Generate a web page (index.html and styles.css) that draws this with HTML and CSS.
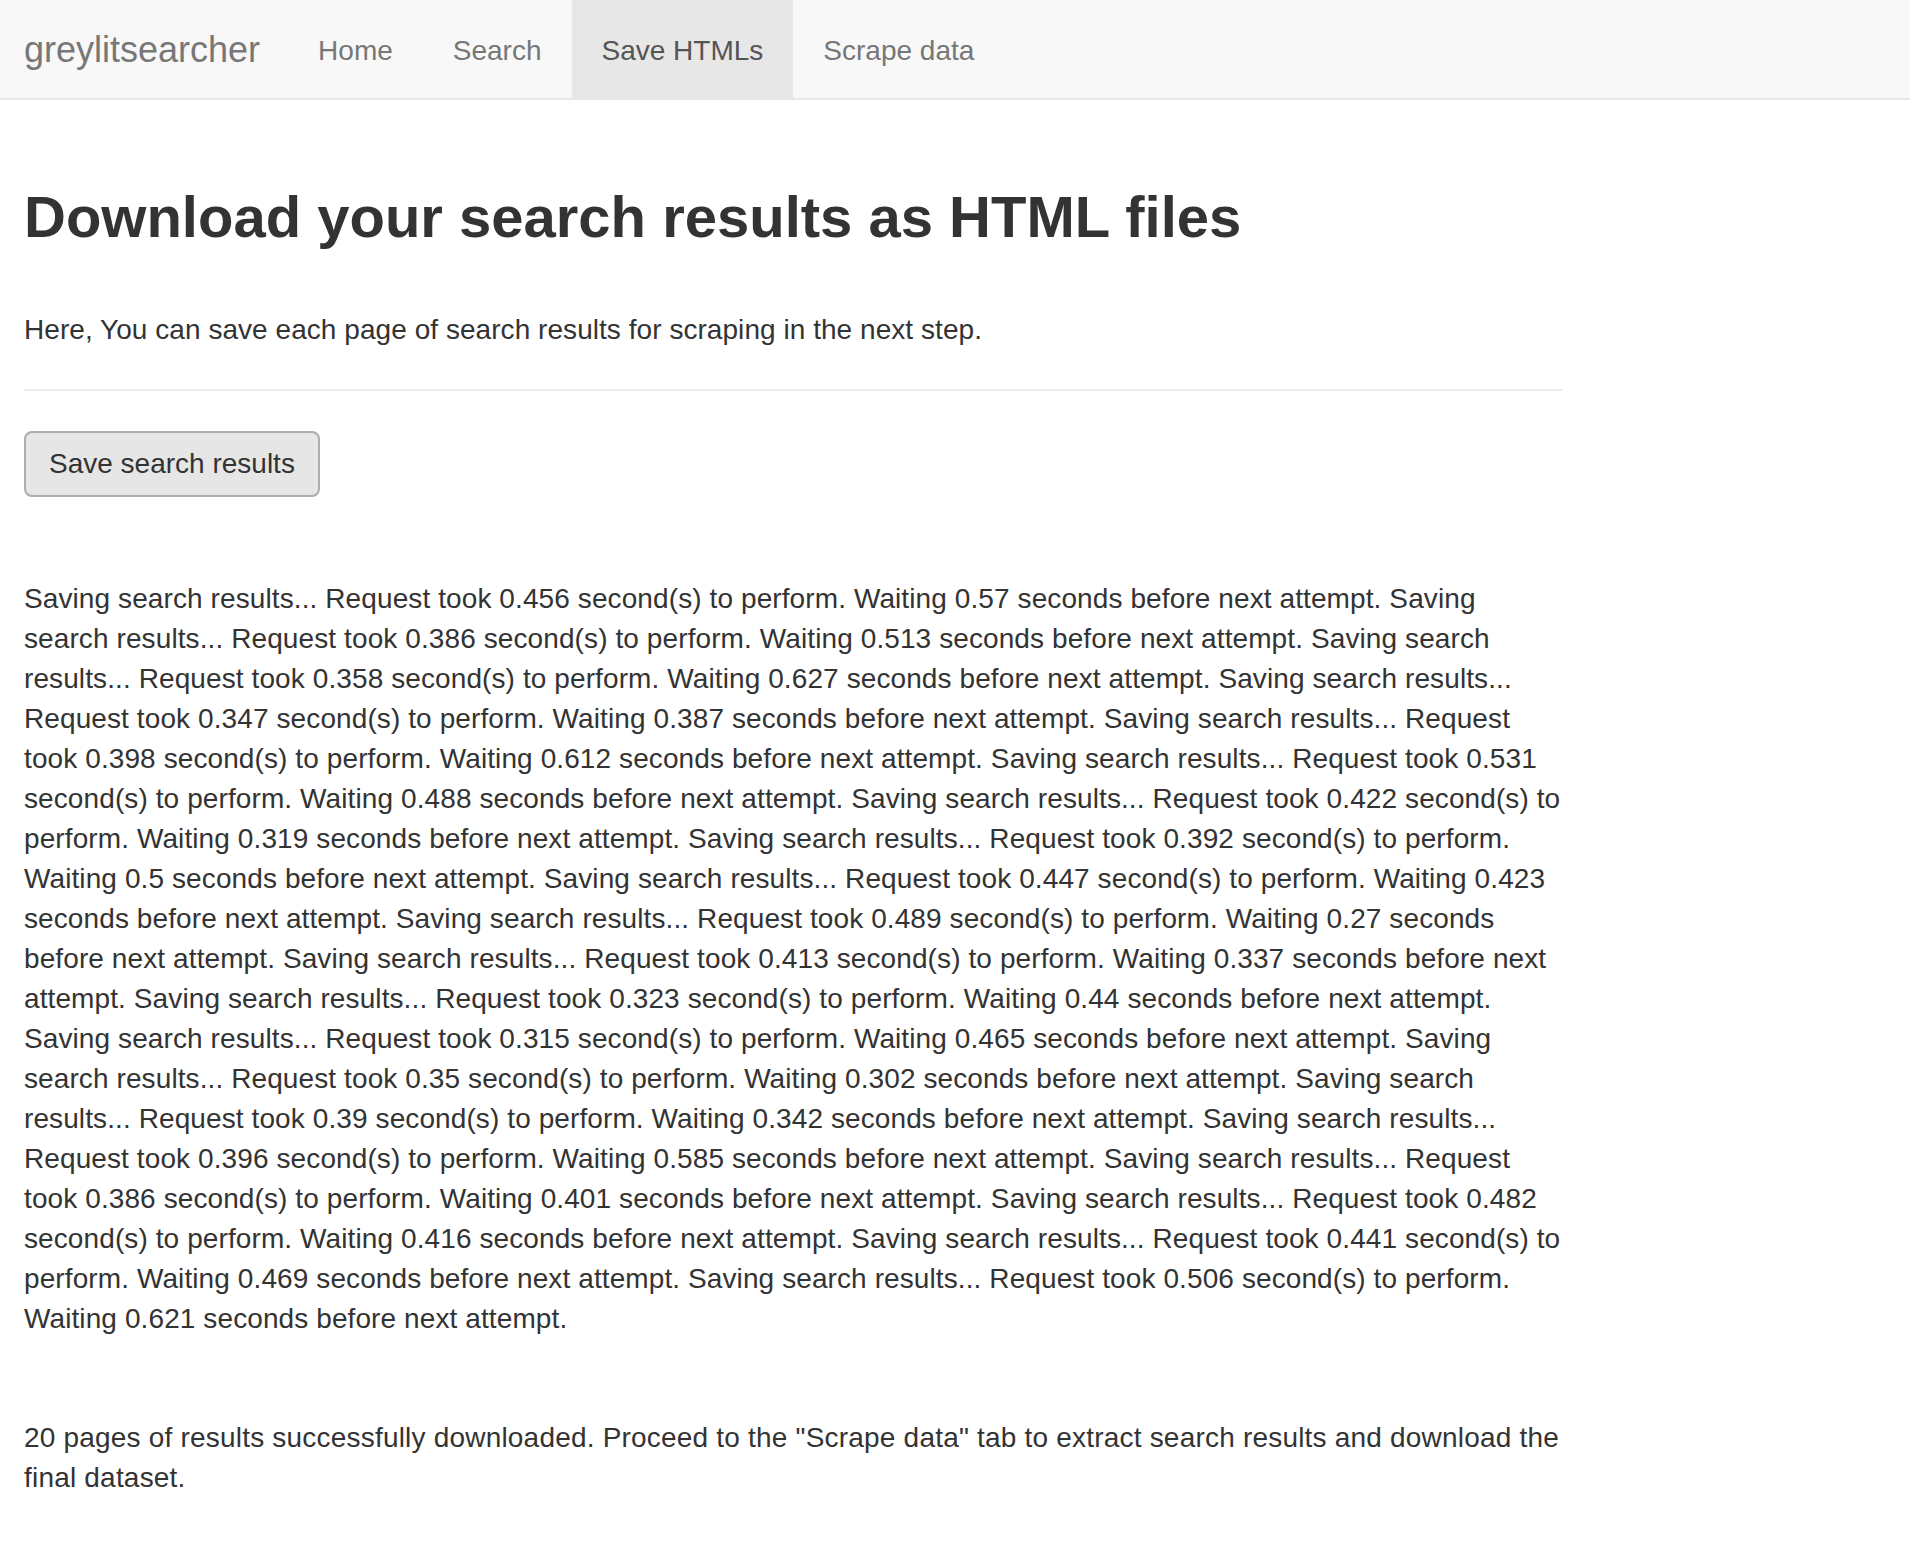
FILE: index.html
```html
<!DOCTYPE html>
<html lang="en">
<head>
<meta charset="utf-8">
<title>greylitsearcher</title>
<link rel="stylesheet" href="styles.css">
</head>
<body>
<nav class="navbar">
  <span class="brand">greylitsearcher</span>
  <ul class="nav">
    <li><a class="nav-link" href="#">Home</a></li>
    <li><a class="nav-link" href="#">Search</a></li>
    <li><a class="nav-link active" href="#">Save HTMLs</a></li>
    <li><a class="nav-link" href="#">Scrape data</a></li>
  </ul>
</nav>
<main class="content">
  <h2 class="title">Download your search results as HTML files</h2>
  <p class="intro">Here, You can save each page of search results for scraping in the next step.</p>
  <hr class="divider">
  <div class="actions"><button class="btn" type="button">Save search results</button></div>
  <p class="log">Saving search results... Request took 0.456 second(s) to perform. Waiting 0.57 seconds before next attempt. Saving search results... Request took 0.386 second(s) to perform. Waiting 0.513 seconds before next attempt. Saving search results... Request took 0.358 second(s) to perform. Waiting 0.627 seconds before next attempt. Saving search results... Request took 0.347 second(s) to perform. Waiting 0.387 seconds before next attempt. Saving search results... Request took 0.398 second(s) to perform. Waiting 0.612 seconds before next attempt. Saving search results... Request took 0.531 second(s) to perform. Waiting 0.488 seconds before next attempt. Saving search results... Request took 0.422 second(s) to perform. Waiting 0.319 seconds before next attempt. Saving search results... Request took 0.392 second(s) to perform. Waiting 0.5 seconds before next attempt. Saving search results... Request took 0.447 second(s) to perform. Waiting 0.423 seconds before next attempt. Saving search results... Request took 0.489 second(s) to perform. Waiting 0.27 seconds before next attempt. Saving search results... Request took 0.413 second(s) to perform. Waiting 0.337 seconds before next attempt. Saving search results... Request took 0.323 second(s) to perform. Waiting 0.44 seconds before next attempt. Saving search results... Request took 0.315 second(s) to perform. Waiting 0.465 seconds before next attempt. Saving search results... Request took 0.35 second(s) to perform. Waiting 0.302 seconds before next attempt. Saving search results... Request took 0.39 second(s) to perform. Waiting 0.342 seconds before next attempt. Saving search results... Request took 0.396 second(s) to perform. Waiting 0.585 seconds before next attempt. Saving search results... Request took 0.386 second(s) to perform. Waiting 0.401 seconds before next attempt. Saving search results... Request took 0.482 second(s) to perform. Waiting 0.416 seconds before next attempt. Saving search results... Request took 0.441 second(s) to perform. Waiting 0.469 seconds before next attempt. Saving search results... Request took 0.506 second(s) to perform. Waiting 0.621 seconds before next attempt.</p>
  <p class="final">20 pages of results successfully downloaded. Proceed to the "Scrape data" tab to extract search results and download the final dataset.</p>
</main>
</body>
</html>
```

FILE: styles.css
```css
html, body {
  margin: 0;
  padding: 0;
  background: #ffffff;
}

body {
  font-family: "Liberation Sans", Arial, Helvetica, sans-serif;
  font-size: 28px;
  line-height: 40px;
  color: #333333;
}

.navbar {
  display: flex;
  align-items: stretch;
  height: 98px;
  background: #f8f8f8;
  border-bottom: 2px solid #e7e7e7;
  padding-left: 24px;
}

.brand {
  display: flex;
  align-items: center;
  font-size: 36px;
  line-height: 40px;
  color: #777777;
  padding-right: 28px;
  padding-top: 2px;
}

.nav {
  display: flex;
  list-style: none;
  margin: 0;
  padding: 0;
}

.nav li {
  display: flex;
}

.nav-link {
  display: flex;
  align-items: center;
  padding: 3px 30px 0 30px;
  color: #777777;
  text-decoration: none;
  font-size: 28px;
  line-height: 40px;
}

.nav-link.active {
  background: #e7e7e7;
  color: #555555;
}

.content {
  width: 1540px;
  padding-left: 24px;
  display: flex;
  flex-direction: column;
}

.title {
  margin: 85px 0 0 0;
  font-size: 58px;
  line-height: 64px;
  font-weight: bold;
  color: #333333;
}

.intro {
  margin: 61px 0 0 0;
  letter-spacing: 0.05px;
}

.divider {
  margin: 39px 0 0 0;
  width: 1538px;
  border: 0;
  border-top: 2px solid #eeeeee;
  height: 0;
}

.actions {
  display: flex;
  margin-top: 40px;
}

.btn {
  font-family: "Liberation Sans", Arial, Helvetica, sans-serif;
  font-size: 28px;
  line-height: 40px;
  color: #333333;
  background: #e6e6e6;
  border: 2px solid #adadad;
  border-radius: 8px;
  padding: 11px 23px;
  margin: 0;
}

.log {
  margin: 82px 0 0 0;
  letter-spacing: 0.1px;
}

.final {
  margin: 79px 0 0 0;
  letter-spacing: 0.2px;
}
```
